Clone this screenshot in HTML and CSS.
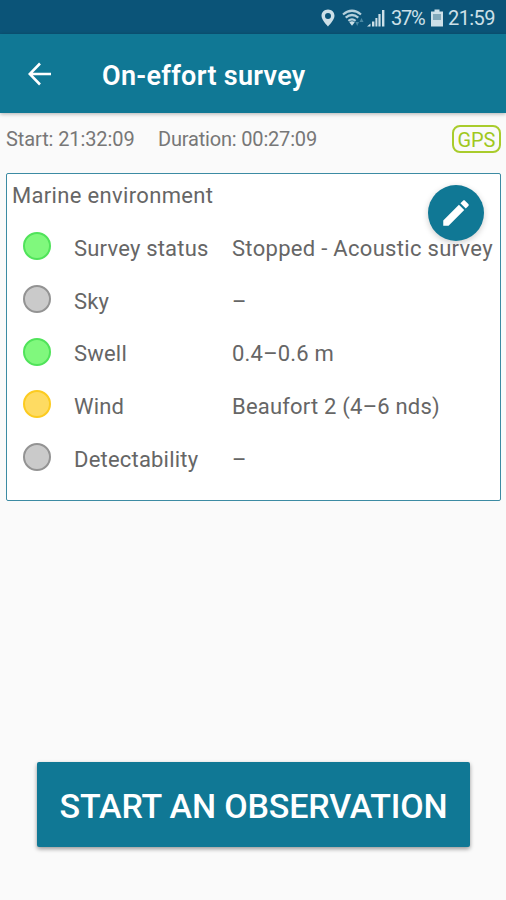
FILE: index.html
```
<!DOCTYPE html>
<html lang="en">
<head>
	<meta charset="utf-8">
	<meta name="viewport" content="width=device-width, initial-scale=1">
	<title>On-effort survey</title>
	<link rel="stylesheet" href="styles.css">
</head>
<body>

<div class="status-bar">
	<svg class="pin" width="14" height="18" viewBox="0 0 14 18">
		<path fill-rule="evenodd" d="M7 0.5C3.2 0.5 0.5 3.3 0.5 6.8C0.5 11 7 17.5 7 17.5S13.5 11 13.5 6.8C13.5 3.3 10.8 0.5 7 0.5ZM7 4A3 3 0 1 1 7 10A3 3 0 1 1 7 4Z"/>
	</svg>
	<svg class="wifi" width="23" height="18" viewBox="0 0 23 18">
		<path class="arc" d="M1 5.5Q10 -2 19 5.5M3.7 8.6Q10 3.4 16.3 8.6M6.4 11.8Q10 8.8 13.6 11.8"/>
		<path d="M7.3 13.2Q10 11.3 12.7 13.2L10 16.8Z"/>
		<path class="faint" d="M13.5 13H17L15.2 17ZM17.5 13L19.5 9L21.5 13Z"/>
	</svg>
	<svg class="signal" width="18" height="18" viewBox="0 0 18 18">
		<path d="M0 17.5L3.5 14.5V17.5ZM5 12.5H7.4V17.5H5ZM8.4 9H10.4V17.5H8.4ZM11.4 5H13.6V17.5H11.4ZM15 1H17.4V17.5H15Z"/>
	</svg>
	<span class="battery-level">37%</span>
	<svg class="battery" width="12" height="18" viewBox="0 0 12 18">
		<path d="M3.5 0.5H8.5V2.5H12V17.5H0V2.5H3.5Z"/>
		<path class="charge" d="M2 5H10V11H2Z"/>
	</svg>
	<span class="clock">21:59</span>
</div>

<div class="app-bar">
	<svg class="back" width="24" height="24" viewBox="0 0 24 24">
		<path d="M23 12H2M12 1.5L1.7 12L12 22.5"/>
	</svg>
	<span class="title">On-effort survey</span>
</div>

<div class="timing">
	<span class="start">Start: 21:32:09</span>
	<span class="duration">Duration: 00:27:09</span>
	<span class="gps">GPS</span>
</div>

<div class="card">
	<div class="card-title"><span>Marine environment</span></div>
	<div class="row">
		<span class="dot green"></span>
		<span class="label">Survey status</span>
		<span class="value stopped">Stopped - Acoustic survey</span>
	</div>
	<div class="row">
		<span class="dot grey"></span>
		<span class="label">Sky</span>
		<span class="value">–</span>
	</div>
	<div class="row">
		<span class="dot green"></span>
		<span class="label">Swell</span>
		<span class="value">0.4–0.6 m</span>
	</div>
	<div class="row">
		<span class="dot yellow"></span>
		<span class="label">Wind</span>
		<span class="value">Beaufort 2 (4–6 nds)</span>
	</div>
	<div class="row">
		<span class="dot grey"></span>
		<span class="label">Detectability</span>
		<span class="value">–</span>
	</div>
	<div class="edit">
		<svg width="34" height="34" viewBox="0 0 24 24">
			<path d="M3 17.25V21h3.75L17.81 9.94l-3.75-3.75L3 17.25zM20.71 7.04c.39-.39.39-1.02 0-1.41l-2.34-2.34c-.39-.39-1.02-.39-1.41 0l-1.83 1.83 3.75 3.75 1.83-1.83z"/>
		</svg>
	</div>
</div>

<div class="observe"><span>START AN OBSERVATION</span></div>

</body>
</html>
```
FILE: styles.css
```
* {
	box-sizing: border-box;
}

body {
	display: flex;
	flex-direction: column;
	height: 900px;
	margin: 0;
	overflow: hidden;
	font-family: Roboto, sans-serif;
	color: #666;
	background: #fafafa;
}

span {
	white-space: nowrap;
}

/* Phone status bar */
.status-bar {
	display: flex;
	flex: none;
	align-items: center;
	justify-content: flex-end;
	height: 34px;
	padding: 2px 10px 0 0;
	font-size: 20px;
	color: #cde0e8;
	background: #0b5478;
}

.status-bar svg {
	fill: #cde0e8;
}

.wifi {
	margin-left: 7px;
}

.wifi .arc {
	fill: none;
	stroke: #b5d0dc;
	stroke-width: 2.2;
}

.wifi .faint {
	fill: #4a88a3;
}

.signal {
	margin-left: 2px;
}

.battery-level {
	width: 35px;
	margin-left: 6px;
	letter-spacing: -1.3px;
}

.battery {
	margin-left: 5px;
}

.battery .charge {
	fill: #82a9ba;
}

.clock {
	width: 48px;
	margin-left: 5px;
	letter-spacing: -0.6px;
}

/* Title bar */
.app-bar {
	display: flex;
	flex: none;
	align-items: center;
	height: 79px;
	padding: 1px 0 0 28px;
	background: #107895;
	box-shadow: 0 1px 4px rgba(0, 0, 0, 0.3);
}

.back {
	fill: none;
	stroke: #fff;
	stroke-width: 2.6;
}

.title {
	margin: 3px 0 0 50px;
	font-size: 27px;
	font-weight: 600;
	letter-spacing: 0.3px;
	color: #fff;
}

/* Start time, duration and GPS state */
.timing {
	display: flex;
	flex: none;
	align-items: center;
	height: 50px;
	padding: 1px 5px 0 6px;
	font-size: 20px;
	letter-spacing: -0.1px;
	color: #777;
}

.start {
	width: 152px;
}

.duration {
	letter-spacing: -0.18px;
}

.gps {
	width: 49px;
	height: 28px;
	margin-left: auto;
	border: 2px solid #a9cc2c;
	border-radius: 8px;
	line-height: 26px;
	text-align: center;
	color: #a0c81e;
}

/* Marine environment */
.card {
	position: relative;
	flex: none;
	width: 495px;
	height: 328px;
	margin: 10px 0 0 6px;
	border: 1.5px solid #3c8ba3;
	border-radius: 2px;
	font-size: 22px;
	letter-spacing: 0.2px;
	background: #fff;
}

.card-title {
	height: 46px;
	padding-left: 5px;
	line-height: 43px;
	letter-spacing: 0.33px;
}

.row {
	display: grid;
	grid-template-columns: 51px 158px auto;
	align-items: center;
	height: 52.7px;
	padding-left: 16px;
}

.label, .value {
	padding-top: 4px;
}

.stopped {
	letter-spacing: 0.3px;
}

.dot {
	width: 28px;
	height: 28px;
	border: 2px solid;
	border-radius: 50%;
}

.green {
	border-color: #50e35a;
	background: #80f87d;
}

.grey {
	border-color: #939393;
	background: #cacaca;
}

.yellow {
	border-color: #fccb20;
	background: #fedb62;
}

.edit {
	position: absolute;
	top: 11px;
	right: 16px;
	display: flex;
	align-items: center;
	justify-content: center;
	width: 56px;
	height: 56px;
	border-radius: 50%;
	background: #107895;
	box-shadow: 0 2px 6px rgba(0, 0, 0, 0.2);
}

.edit svg {
	fill: #fff;
}

.observe {
	flex: none;
	width: 433px;
	height: 85px;
	margin: auto 0 53px 37px;
	border-radius: 2px;
	font-size: 34px;
	font-weight: 500;
	line-height: 88px;
	letter-spacing: -0.15px;
	text-align: center;
	color: #fff;
	background: #107895;
	box-shadow: 0 2px 4px rgba(0, 0, 0, 0.4);
}
```
